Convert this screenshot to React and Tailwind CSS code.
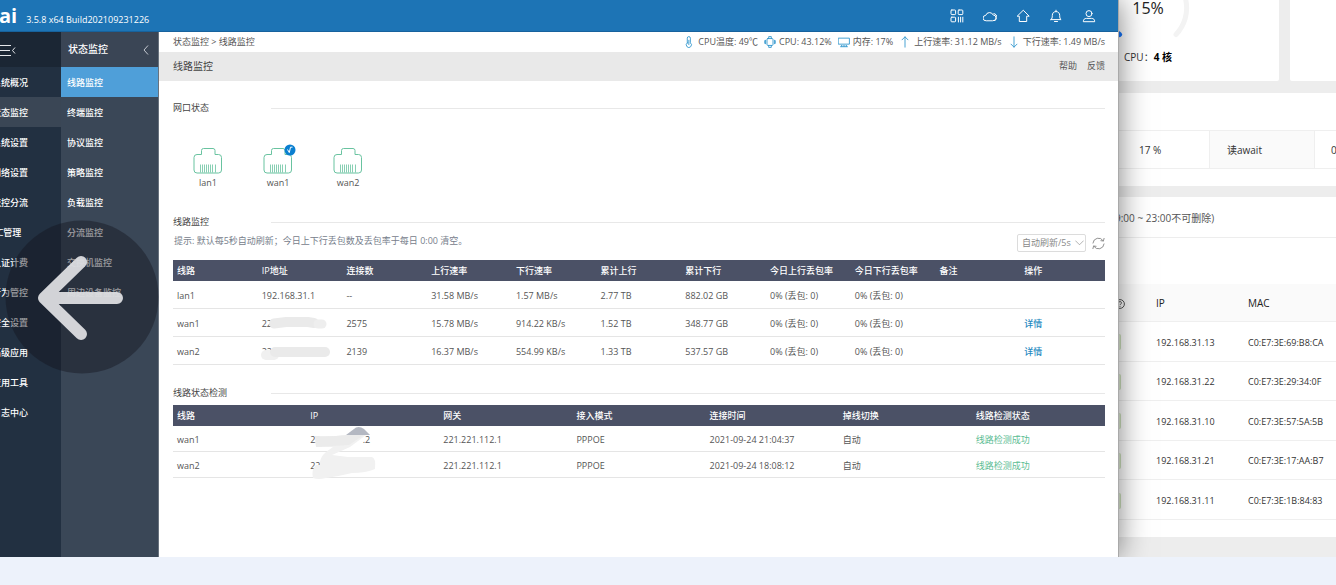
import React from "react";

const mainMenu = ["系统概况", "状态监控", "系统设置", "网络设置", "流控分流", "AC管理", "认证计费", "行为管控", "安全设置", "高级应用", "应用工具", "日志中心"];
const subMenu = ["线路监控", "终端监控", "协议监控", "策略监控", "负载监控", "分流监控", "交换机监控", "周边设备监控"];

const lineHeads = ["线路", "IP地址", "连接数", "上行速率", "下行速率", "累计上行", "累计下行", "今日上行丢包率", "今日下行丢包率", "备注", "操作"];
const lines = [
  { name: "lan1", ip: "192.168.31.1", conn: "--", up: "31.58 MB/s", down: "1.57 MB/s", tu: "2.77 TB", td: "882.02 GB" },
  { name: "wan1", ip: "22", mask: "a", conn: "2575", up: "15.78 MB/s", down: "914.22 KB/s", tu: "1.52 TB", td: "348.77 GB", detail: true },
  { name: "wan2", ip: "221.1", mask: "b", conn: "2139", up: "16.37 MB/s", down: "554.99 KB/s", tu: "1.33 TB", td: "537.57 GB", detail: true },
];
const checkHeads = ["线路", "IP", "网关", "接入模式", "连接时间", "掉线切换", "线路检测状态"];
const checks = [
  { name: "wan1", start: "22", end: ".2", time: "2021-09-24 21:04:37", mask: true },
  { name: "wan2", start: "22", end: "", time: "2021-09-24 18:08:12" },
];
const devices = [
  ["192.168.31.13", "C0:E7:3E:69:B8:CA"],
  ["192.168.31.22", "C0:E7:3E:29:34:0F"],
  ["192.168.31.10", "C0:E7:3E:57:5A:5B"],
  ["192.168.31.21", "C0:E7:3E:17:AA:B7"],
  ["192.168.31.11", "C0:E7:3E:1B:84:83"],
];

function Icon({ children, className }) {
  return (
    <svg viewBox="0 0 14 14" fill="none" stroke="currentColor" strokeWidth="1" strokeLinecap="round" strokeLinejoin="round" className={className} aria-hidden="true">
      {children}
    </svg>
  );
}

function TopIcons() {
  const icons = [
    ["二维码", <><rect x="1" y="1" width="4.6" height="4.6" rx="0.8" /><rect x="8.2" y="1" width="4.6" height="4.6" rx="0.8" /><rect x="1" y="8.2" width="4.6" height="4.6" rx="0.8" /><path d="M8.4 8.2v4.8M10.6 8.2v4.8M12.8 8.2v4.8" /></>],
    ["云服务", <><path d="M2.800 11.800a2.700 2.700 0 0 1-.1-5.400 4 4 0 0 1 7.500-.4 2.900 2.900 0 0 1-.2 5.800z" /><path d="M10.900 4.600c1.900.3 3 1.800 3 3.600 0 1.700-1 3-2.500 3.400" /></>],
    ["首页", <path d="M7 1.500 1.200 7.200h2.100v5.300h7.400V7.200h2.100z" />],
    ["通知", <><path d="M1.900 10.600h10.200c-1.200-.9-1.400-1.800-1.400-4.200 0-2.200-1.400-3.800-3.700-3.800S3.300 4.200 3.300 6.400c0 2.400-.2 3.300-1.400 4.200z" /><path d="M5.500 12.500h3M7 1.200v1.300" /></>],
    ["用户", <><circle cx="7" cy="4.600" r="3" /><path d="M1.300 12.300c0-1.900 1.200-2.900 3.200-2.900h5c2 0 3.200 1 3.200 2.900z" /></>],
  ];
  return (
    <div className="flex items-center gap-[19px] pr-[22px]">
      {icons.map(([label, shape]) => (
        <button key={label} type="button" aria-label={label} className="text-white">
          <Icon className="size-[14px]">{shape}</Icon>
        </button>
      ))}
    </div>
  );
}

function StatusItem({ icon, children }) {
  return (
    <li className="flex items-center gap-[3px]">
      <Icon className="size-3 shrink-0 text-[#2a93cc]">{icon}</Icon>
      <span>{children}</span>
    </li>
  );
}

function SectionTitle({ children }) {
  return (
    <div className="flex h-4 items-center">
      <h2 className="w-[98px] text-[#444]">{children}</h2>
      <div className="h-px flex-1 bg-[#e8e8e8]" />
    </div>
  );
}

function Port({ name, active }) {
  return (
    <div className="relative flex w-[70px] flex-col items-center">
      <svg viewBox="0 0 30 26" fill="none" stroke="#69c3a0" className="h-[26px] w-[30px]" aria-hidden="true">
        <path d="M8.500 6.500V2.500a2 2 0 0 1 2-2H20a2 2 0 0 1 2 2V6.500h3.500a3 3 0 0 1 3 3V22a3 3 0 0 1-3 3H4A3 3 0 0 1 1 22V9.500a3 3 0 0 1 3-3z" stroke="none" />
        <path d="M4 6.500h4.500V2.500a2 2 0 0 1 2-2H20a2 2 0 0 1 2 2V6.500h3.500a3 3 0 0 1 3 3V22a3 3 0 0 1-3 3H4A3 3 0 0 1 1 22V9.500a3 3 0 0 1 3-3z" />
        <path d="M7.500 16.500v8M9.500 16.500v8M11.500 16.500v8M13.500 16.500v8M15.500 16.500v8M17.500 16.500v8M19.500 16.500v8M22.500 16.500v8" strokeOpacity="0.8" />
      </svg>
      {active && (
        <svg viewBox="0 0 12 12" className="absolute top-[-4px] right-[17px] size-3" aria-hidden="true">
          <circle cx="6" cy="6" r="5.500" fill="#0a7fd0" />
          <path d="M3.500 5.500 5.300 8.600 6.500 3.200H8.500" fill="none" stroke="#fff" strokeWidth="1" />
        </svg>
      )}
      <span className="h-4 pt-px leading-4 text-[#555]">{name}</span>
    </div>
  );
}

function Smudge({ kind }) {
  return (
    <svg viewBox="0 0 84 28" className="absolute top-0 left-0 h-7 w-[84px]" fill="none" strokeLinecap="round" aria-hidden="true">
      {kind === "a" ? (
        <>
          <path d="M16 14.500 28 13H50L56 14" stroke="#eaeaea" strokeWidth="10" />
          <path d="M60 15H64" stroke="#eeeeee" strokeWidth="9" />
        </>
      ) : (
        <>
          <path d="M8 18H16" stroke="#f0f0f0" strokeWidth="10" />
          <path d="M17 15H67" stroke="#eaeaea" strokeWidth="10" />
        </>
      )}
    </svg>
  );
}

function LinePage() {
  return (
    <main className="min-w-0 flex-1 bg-white text-[9px] text-[#555]">
      <div className="flex h-5 items-center justify-between pr-[13px] pl-[14px]">
        <nav className="whitespace-nowrap">
          <a href="#status">状态监控</a> &gt; <a href="#line">线路监控</a>
        </nav>
        <ul className="flex gap-[6px] whitespace-nowrap">
          <StatusItem icon={<><path d="M5 8V2.500a1.800 1.800 0 0 1 3.600 0V8a3 3 0 1 1-3.600 0z" /><path d="M6.800 5v5" /></>}>CPU温度: 49℃</StatusItem>
          <StatusItem icon={<><rect x="3.500" y="3" width="7" height="8" rx="1" /><path d="M5.500 3V.7h3V3M5.500 11v2.300h3V11M1.800 5v4M.3 5.500v3M12.200 5v4M13.700 5.500v3" /></>}>CPU: 43.12%</StatusItem>
          <StatusItem icon={<><path d="M.7 2.500h12.600v7H.7zM3 12.500h8M4 11v1M6 11v1M8 11v1M10 11v1" /></>}>内存: 17%</StatusItem>
          <StatusItem icon={<path d="M7 13V1M3.500 4.500 7 1l3.500 3.500" />}>上行速率: 31.12 MB/s</StatusItem>
          <StatusItem icon={<path d="M7 1v12M3.500 9.500 7 13l3.500-3.500" />}>下行速率: 1.49 MB/s</StatusItem>
        </ul>
      </div>

      <div className="flex h-[29px] items-center justify-between bg-[#e9e9e9] pr-[13px] pl-[14px]">
        <h1 className="text-[10px] text-[#444]">线路监控</h1>
        <div className="flex gap-[10px] pb-[2px]">
          <a href="#help">帮助</a>
          <a href="#feedback">反馈</a>
        </div>
      </div>

      <div className="pt-[19px] pr-[13px] pl-[14px]">
        <SectionTitle>网口状态</SectionTitle>
        <div className="mt-8 mb-6 flex">
          <Port name="lan1" />
          <Port name="wan1" active />
          <Port name="wan2" />
        </div>

        <SectionTitle>线路监控</SectionTitle>
        <div className="flex h-[30px] items-start justify-between">
          <p className="pl-px leading-[22px] text-[#77808c]">提示: 默认每5秒自动刷新；今日上下行丢包数及丢包率于每日 0:00 清空。</p>
          <div className="flex items-center gap-[6px] pt-1">
            <div className="relative">
              <select aria-label="刷新间隔" className="block h-[18px] w-[69px] appearance-none rounded-xs border border-[#dcdcdc] bg-white pl-1 text-[9px] text-[#888]">
                <option>自动刷新/5s</option>
              </select>
              <Icon className="pointer-events-none absolute top-1 right-[2px] size-[9px] text-[#888]"><path d="m1 4.500 6 6 6-6" /></Icon>
            </div>
            <button type="button" aria-label="刷新" className="text-[#888]">
              <Icon className="size-[13px]"><path d="M1 6.500A6 6 0 0 1 12 4M13 7.500A6 6 0 0 1 2 10M13 1.500 12.300 4.300 9.600 4M1 12.500 1.700 9.700 4.400 10" /></Icon>
            </button>
          </div>
        </div>

        <table className="w-full table-fixed border-separate border-spacing-0 text-left whitespace-nowrap">
          <thead>
            <tr>
              {lineHeads.map((h) => (
                <th key={h} className="h-[21px] bg-[#4b5166] p-0 pl-1 font-medium text-white">{h}</th>
              ))}
            </tr>
          </thead>
          <tbody className="[&_td]:h-7 [&_td]:border-b [&_td]:border-[#e5e5e5] [&_td]:p-0 [&_td]:pt-[2px] [&_td]:pl-1">
            {lines.map((l) => (
              <tr key={l.name}>
                <td>{l.name}</td>
                <td className="relative">{l.ip}{l.mask && <Smudge kind={l.mask} />}</td>
                <td>{l.conn}</td>
                <td>{l.up}</td>
                <td>{l.down}</td>
                <td>{l.tu}</td>
                <td>{l.td}</td>
                <td>0% (丢包: 0)</td>
                <td>0% (丢包: 0)</td>
                <td></td>
                <td>{l.detail && <a href="#detail" className="font-medium text-[#1f8abf]">详情</a>}</td>
              </tr>
            ))}
          </tbody>
        </table>

        <div className="mt-5 mb-1">
          <SectionTitle>线路状态检测</SectionTitle>
        </div>
        <table className="w-full table-fixed border-separate border-spacing-0 text-left whitespace-nowrap">
          <thead>
            <tr>
              {checkHeads.map((h) => (
                <th key={h} className="h-[21px] bg-[#4b5166] p-0 pl-1 font-medium text-white">{h}</th>
              ))}
            </tr>
          </thead>
          <tbody className="[&_td]:h-[26px] [&_td]:border-b [&_td]:border-[#e5e5e5] [&_td]:p-0 [&_td]:pt-[2px] [&_td]:pl-1">
            {checks.map((c) => (
              <tr key={c.name}>
                <td>{c.name}</td>
                <td className="relative">
                  <span className="flex w-[60px] justify-between"><span>{c.start}</span><span>{c.end}</span></span>
                  {c.mask && (
                    <svg viewBox="0 0 84 54" className="absolute top-0 left-0 z-10 h-[54px] w-[84px]" fill="none" aria-hidden="true">
                      <path d="M40 9 50 1.500Q54 0 58 3L64 9z" fill="#b4b8c2" />
                      <path d="M9 10Q25 11 40 9H60Q52 15 44 21L26 29Q34 30 42 31L66 31Q70 32 69 43Q60 47 46 47Q34 50 20 52Q12 54 7 52Q5 44 10 39H14Q13 32 20 26L27 21H10z" fill="#f1f1f1" />
                      <path d="M9 10Q25 11 40 9H58Q50 14 43 19L10 21z" fill="#ebebeb" />
                    </svg>
                  )}
                </td>
                <td>221.221.112.1</td>
                <td>PPPOE</td>
                <td>{c.time}</td>
                <td>自动</td>
                <td className="text-[#5dbd94]">线路检测成功</td>
              </tr>
            ))}
          </tbody>
        </table>
      </div>
    </main>
  );
}

function RouterWindow() {
  return (
    <div className="relative z-10 flex min-w-0 flex-col border-r border-[#a9a9a9] bg-white shadow-[0_0_28px_rgba(0,0,0,0.5)]">
      <header className="flex h-8 items-center justify-between border-b border-[#17629d] bg-[#1d74b5] text-white">
        <div className="flex items-center gap-[9px]">
          <span className="-ml-px text-[20px] leading-8 font-bold">ai</span>
          <span className="pt-2 text-[9px]">3.5.8 x64 Build202109231226</span>
        </div>
        <TopIcons />
      </header>
      <div className="relative flex flex-1">
        <nav className="w-[61px] shrink-0 overflow-hidden bg-[#223041] text-[9px] font-medium text-white">
          <button type="button" aria-label="收起菜单" className="flex h-[35px] w-full items-center bg-[#1b2634]">
            <svg viewBox="0 0 16 12" className="h-3 w-4" fill="none" stroke="#e5e7eb" aria-hidden="true">
              <path d="M0 1.500h11M0 6.500h10M0 11.500h11M15 3.500 12.500 6.500 15 9.500" />
            </svg>
          </button>
          {mainMenu.map((m) => (
            <a key={m} href="#menu" className={m === "状态监控" ? "flex h-[30px] items-center bg-[#3a4655] pt-[2px]" : "flex h-[30px] items-center pt-[2px]"}>
              <span className="-ml-2">{m}</span>
            </a>
          ))}
        </nav>
        <nav className="w-[98px] shrink-0 border-r border-[#68727e] bg-[#3a4757] text-[9px] font-medium text-white">
          <div className="flex h-[35px] items-center justify-between bg-[#3a4555] pr-[9px] pl-[7px] text-[10px]">
            <span>状态监控</span>
            <button type="button" aria-label="收起">
              <svg viewBox="0 0 6 10" className="h-[10px] w-[6px]" fill="none" stroke="#c5cad1" aria-hidden="true"><path d="M5 .5 1 5l4 4.500" /></svg>
            </button>
          </div>
          {subMenu.map((m) => (
            <a key={m} href="#submenu" className={m === "线路监控" ? "flex h-[30px] items-center bg-[#4f9fd9] pt-[2px] pl-[6px]" : "flex h-[30px] items-center pt-[2px] pl-[6px]"}>{m}</a>
          ))}
        </nav>
        <LinePage />
        <button type="button" aria-label="上一张" className="absolute top-[188px] left-[5px] size-[154px]">
          <svg viewBox="0 0 154 154" className="size-full" fill="none" aria-hidden="true">
            <circle cx="77" cy="77" r="76.500" fill="#14141c" fillOpacity="0.42" />
            <path d="M76 42 39 78 76 114M41 78H112" stroke="#dcdde0" strokeOpacity="0.95" strokeWidth="12" strokeLinecap="round" strokeLinejoin="round" />
          </svg>
        </button>
      </div>
    </div>
  );
}

function DeviceWindow() {
  return (
    <div className="flex min-w-0 flex-col overflow-hidden bg-[#ededed] text-[10px] whitespace-nowrap text-[#333]">
      <div className="flex h-[81px] gap-[11px]">
        <section className="w-40 rounded-br-xs bg-white">
          <div className="flex w-[58px] flex-col items-center">
            <div className="relative flex h-[46px] w-[86px] shrink-0">
              <svg viewBox="0 0 86 46" className="h-[46px] w-[86px]" fill="none" strokeWidth="5" strokeLinecap="round" aria-hidden="true">
                <path d="M71 34.500A38.500 38.500 0 0 0 80.800 0" stroke="#f3f3f3" />
                <path d="M14 34 14.500 34.500" stroke="#1677ff" />
              </svg>
              <span className="absolute inset-x-0 top-0 text-center text-base leading-4 text-[#222]">15%</span>
            </div>
            <p className="leading-[22px]">CPU：<b className="text-black">4 核</b></p>
          </div>
        </section>
        <section className="flex-1 rounded-bl-xs bg-white" />
      </div>

      <section className="mt-3 h-[93px] bg-white pt-[37px]">
        <table className="w-full table-fixed border-separate border-spacing-0 border-y border-[#efefef] text-left">
          <tbody>
            <tr className="[&>*]:h-[37px] [&>*]:p-0 [&>*]:pt-[2px] [&>*]:font-normal">
              <td className="w-[91px] border-r border-[#efefef]"><span className="pl-5">17 %</span></td>
              <th className="w-[105px] border-r border-[#efefef] bg-[#fafafa]"><span className="pl-[17px]">读await</span></th>
              <td><span className="pl-4">0</span></td>
            </tr>
          </tbody>
        </table>
      </section>

      <section className="mt-[11px] bg-white pb-[17px]">
        <h2 className="-ml-1 h-[41px] border-b border-[#ededed] leading-[42px] text-[#555]">9:00 ~ 23:00不可删除)</h2>
        <table className="mt-[46px] h-[236px] w-full table-fixed border-separate border-spacing-0 text-left text-[9px] [&_td]:border-b [&_td]:border-[#efefef] [&_td]:p-0 [&_td]:pt-[2px] [&_th]:border-b [&_th]:border-[#efefef] [&_th]:p-0 [&_th]:pt-[2px]">
          <thead>
            <tr className="h-[38px] bg-[#fafafa] text-[10px] text-[#222]">
              <th className="w-[37px]">
                <svg viewBox="0 0 10 10" className="-ml-1 size-[10px]" fill="none" stroke="#444" strokeWidth="0.900" aria-hidden="true">
                  <circle cx="5" cy="5" r="4.400" />
                  <path d="M3.600 4a1.400 1.400 0 1 1 2 1.200c-.4.2-.6.4-.6.900M5 7v.8" />
                </svg>
              </th>
              <th className="w-[92px] font-medium">IP</th>
              <th className="font-medium">MAC</th>
            </tr>
          </thead>
          <tbody>
            {devices.map(([ip, mac]) => (
              <tr key={ip}>
                <td><div className="h-4 w-[2px] rounded-r-xs border-r border-[#cfe3bf] bg-[#e3f1d8]" /></td>
                <td>{ip}</td>
                <td>{mac}</td>
              </tr>
            ))}
          </tbody>
        </table>
      </section>
    </div>
  );
}

export default function App() {
  return (
    <div className="flex min-h-screen flex-col bg-[#edf2fb] font-['Open_Sans','Noto_Sans_CJK_SC',sans-serif]">
      <div className="grid flex-1 grid-cols-[1119fr_217fr] overflow-hidden">
        <RouterWindow />
        <DeviceWindow />
      </div>
      <footer className="h-7" />
    </div>
  );
}
